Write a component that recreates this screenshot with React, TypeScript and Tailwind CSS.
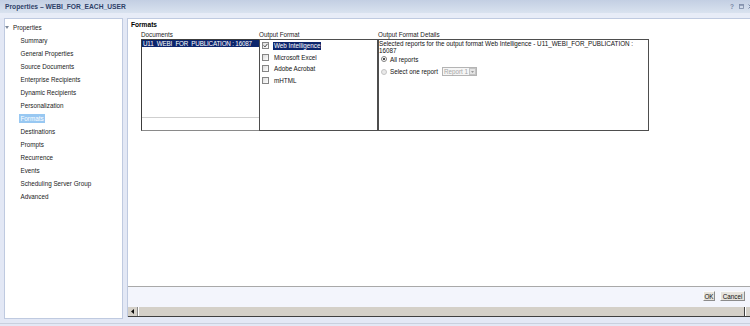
import React from "react";

const tree = [
  "Summary",
  "General Properties",
  "Source Documents",
  "Enterprise Recipients",
  "Dynamic Recipients",
  "Personalization",
  "Formats",
  "Destinations",
  "Prompts",
  "Recurrence",
  "Events",
  "Scheduling Server Group",
  "Advanced",
];

function Check({ checked }: { checked?: boolean }) {
  return (
    <div className="w-[7px] h-[7px] shrink-0 border border-[#858585] bg-linear-to-br from-[#dcdcdc] to-white flex items-center justify-center">
      {checked && (
        <svg width="5" height="5" viewBox="0 0 5 5">
          <path d="M0.6 2.4 L2 3.9 L4.5 0.8" stroke="#333" strokeWidth="0.9" fill="none" />
        </svg>
      )}
    </div>
  );
}

function Radio({ on, disabled }: { on?: boolean; disabled?: boolean }) {
  return (
    <div
      className={
        disabled
          ? "w-[6px] h-[6px] shrink-0 rounded-full border border-[#c4c4c4] bg-[#e9e9e9]"
          : "w-[6px] h-[6px] shrink-0 rounded-full border border-[#7d7d7d] bg-white flex items-center justify-center"
      }
    >
      {on && <div className="w-[2px] h-[2px] rounded-full bg-[#111]" />}
    </div>
  );
}

export default function App() {
  return (
    <div className="w-[750px] h-[326px] overflow-hidden bg-[#e3e8f5] font-['Liberation_Sans',Arial,sans-serif] text-[6.3px] leading-[7px] text-[#111]">
      <div className="w-[758px] h-[326px] flex flex-col">
        {/* Title bar */}
        <div className="h-[13px] shrink-0 bg-linear-to-b from-[#c3cfe3] to-[#d9e2ef] flex items-center justify-between pl-[5px] pr-[5px]">
          <span className="font-bold text-[6.7px] text-[#2e4168]">Properties – WEBI_FOR_EACH_USER</span>
          <div className="flex items-center text-[#7b89a6]">
            <span className="text-[6.5px] font-bold">?</span>
            <svg className="ml-[5px]" width="5" height="5" viewBox="0 0 5 5">
              <rect x="0.5" y="0.5" width="4" height="4" fill="none" stroke="#7b89a6" strokeWidth="0.8" />
              <line x1="0.5" y1="1.2" x2="4.5" y2="1.2" stroke="#7b89a6" strokeWidth="1" />
            </svg>
            <svg className="ml-[4px]" width="5" height="5" viewBox="0 0 5 5">
              <path d="M0.5 0.5 L4.5 4.5 M4.5 0.5 L0.5 4.5" stroke="#7b89a6" strokeWidth="1" />
            </svg>
          </div>
        </div>
        <div className="h-[5px] shrink-0 bg-[#e7ecf7]" />

        {/* Body */}
        <div className="flex gap-[4px] pl-[4px] h-[301px] shrink-0">
          {/* Left tree panel */}
          <div className="w-[119px] h-[301px] shrink-0 border border-[#bfcae0] bg-white pt-[2px]">
            <div className="h-[13px] flex items-center">
              <svg width="4" height="3" viewBox="0 0 4 3">
                <path d="M0 0 L4 0 L2 3 Z" fill="#7f8a9c" />
              </svg>
              <span className="ml-[4px] text-[#1a1a1a]">Properties</span>
            </div>
            {tree.map((t) => (
              <div key={t} className="h-[13px] flex items-center pl-[14px]">
                {t === "Formats" ? (
                  <span className="inline-block px-[1.5px] leading-[9px] bg-[#98c8f2] text-white">{t}</span>
                ) : (
                  <span className="inline-block px-[1.5px] text-[#1a1a1a]">{t}</span>
                )}
              </div>
            ))}
          </div>

          {/* Right panel */}
          <div className="w-[631px] h-[299px] shrink-0 border-l border-t border-[#bfcae0] bg-white flex flex-col">
            <div className="flex-1 bg-white">
              <div className="ml-[3px] mt-[2px] h-[8px] leading-[8px] font-bold text-[6.6px] text-[#000]">Formats</div>
              <div className="ml-[13px] flex">
                {/* Documents */}
                <div className="w-[118px] shrink-0">
                  <div className="h-[10px] pt-[2px] text-[#222]">Documents</div>
                  <div className="h-[92px] border-l border-t border-[#3c3c3c] border-b border-b-[#8a8a8a] flex flex-col">
                    <div className="h-[78px] border-b border-[#cfcfcf]">
                      <div className="h-[7px] leading-[7px] bg-[#0c256c] text-white pl-[1px] tracking-[-0.2px] whitespace-nowrap overflow-hidden">
                        U11_WEBI_FOR_PUBLICATION : 16087
                      </div>
                    </div>
                    <div className="flex-1" />
                  </div>
                </div>
                {/* Output Format */}
                <div className="w-[119px] shrink-0">
                  <div className="h-[10px] pt-[2px] text-[#222]">Output Format</div>
                  <div className="h-[92px] border border-[#4e4e4e]">
                    {[
                      ["Web Intelligence", true],
                      ["Microsoft Excel", false],
                      ["Adobe Acrobat", false],
                      ["mHTML", false],
                    ].map(([label, on]) => (
                      <div key={label as string} className="h-[11.5px] flex items-center pl-[2px]">
                        <Check checked={on as boolean} />
                        {on ? (
                          <span className="ml-[4px] px-[1px] leading-[8px] bg-[#0c256c] text-white">{label as string}</span>
                        ) : (
                          <span className="ml-[4px] px-[1px] text-[#111]">{label as string}</span>
                        )}
                      </div>
                    ))}
                  </div>
                </div>
                {/* Output Format Details */}
                <div className="w-[271px] shrink-0">
                  <div className="h-[10px] pt-[2px] text-[#222]">Output Format Details</div>
                  <div className="h-[92px] border border-[#4e4e4e]">
                    <div className="leading-[7px] text-[#111]">
                      Selected reports for the output format Web Intelligence - U11_WEBI_FOR_PUBLICATION :
                      <br />
                      16087
                    </div>
                    <div className="h-[10px] flex items-center pl-[2px]">
                      <Radio on />
                      <span className="ml-[3px] text-[#111]">All reports</span>
                    </div>
                    <div className="mt-[2px] h-[11px] flex items-center pl-[2px]">
                      <Radio disabled />
                      <span className="ml-[3px] text-[#111]">Select one report</span>
                      <div className="ml-[4px] w-[35px] h-[9px] border border-[#b4b4b4] bg-[#f6f6f6] flex items-center">
                        <span className="flex-1 pl-[1px] text-[#a6a6a6] leading-[7px]">Report 1</span>
                        <div className="w-[7px] h-[7px] bg-[#e4e4e4] border border-[#c4c4c4] flex items-center justify-center">
                          <svg width="3" height="2" viewBox="0 0 3 2">
                            <path d="M0 0 L3 0 L1.5 2 Z" fill="#9a9a9a" />
                          </svg>
                        </div>
                      </div>
                    </div>
                  </div>
                </div>
              </div>
            </div>

            {/* Footer with buttons */}
            <div className="h-[21px] shrink-0 border-t border-[#a9a9a9] bg-[#f3f5fc] flex justify-end items-start pt-[4px] pr-[13px] gap-[5px]">
              <div className="w-[12px] h-[10px] bg-[#e6e3dc] border border-t-[#fafafa] border-l-[#fafafa] border-r-[#8c8c8c] border-b-[#8c8c8c] flex items-center justify-center text-[#111] leading-[7px]">
                OK
              </div>
              <div className="w-[25px] h-[10px] bg-[#e6e3dc] border border-t-[#fafafa] border-l-[#fafafa] border-r-[#8c8c8c] border-b-[#8c8c8c] flex items-center justify-center text-[#111] leading-[7px]">
                Cancel
              </div>
            </div>

            {/* Horizontal scrollbar */}
            <div className="h-[10px] shrink-0 bg-[#d4d0c8] border-b border-[#3f3f3f] flex">
              <div className="w-[10px] h-full border-r border-[#8a8a8a] flex items-center justify-center">
                <svg width="3" height="5" viewBox="0 0 3 5">
                  <path d="M3 0 L0 2.5 L3 5 Z" fill="#0a0a0a" />
                </svg>
              </div>
              <div className="flex-1 h-full border-l border-white border-r border-r-[#3f3f3f]" />
              <div className="w-[10px] h-full border-l border-white" />
              <div className="w-[3px] h-full" />
            </div>
          </div>
        </div>

        <div className="mt-[4px] h-[1px] bg-[#c9d0de]" />
      </div>
    </div>
  );
}
